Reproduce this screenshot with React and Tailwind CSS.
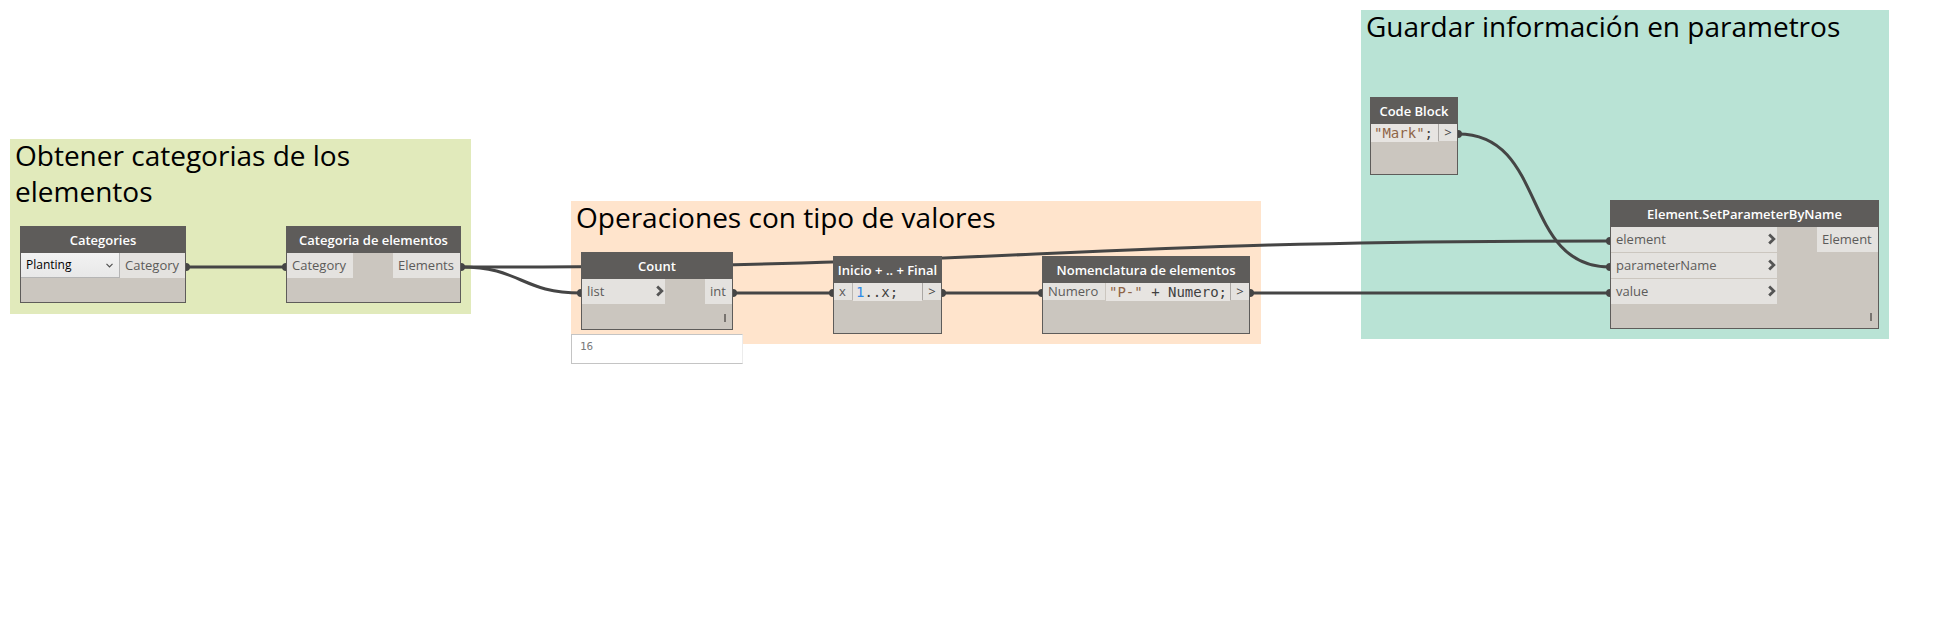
const WIRES = [
  'M187 267 H286',
  'M461 267 C1035 267 1036 241 1610 241',
  'M461 267 C521 267 521 293 581 293',
  'M733 293 H833',
  'M942 293 H1042',
  'M1250 293 H1610',
  'M1458 134 C1548 134 1520 267 1610 267',
]

const PORTS = [
  [186, 267], [286, 267], [461, 267], [581, 293], [733, 293], [833, 293], [942, 293],
  [1042, 293], [1250, 293], [1458, 134], [1610, 241], [1610, 267], [1610, 293],
]

function Wires() {
  return (
    <svg className="absolute left-0 top-0 h-[636px] w-[1940px]" viewBox="0 0 1940 636" fill="none" aria-hidden="true">
      <g stroke="#454545" strokeWidth="3">
        {WIRES.map((d) => <path key={d} d={d} />)}
      </g>
      <g fill="#454545">
        {PORTS.map(([x, y]) => <circle key={`${x}-${y}`} cx={x} cy={y} r="4" />)}
      </g>
    </svg>
  )
}

function Group({ title, className }) {
  return (
    <section className={`absolute px-[5px] ${className}`}>
      <h2 className="-mt-0.5 text-[28px] leading-9 text-black">{title}</h2>
    </section>
  )
}

function Node({ title, className, children }) {
  return (
    <article className={`absolute flex flex-col border border-[#5e5c5a] bg-[#cbc6bf] ${className}`}>
      <h3 className="flex h-[26px] shrink-0 items-center justify-center whitespace-nowrap bg-[#5e5c5a] pt-px text-[13px] font-semibold text-white">
        {title}
      </h3>
      <div className="flex items-start justify-between">{children}</div>
    </article>
  )
}

function Port({ name, chevron, size = 'h-[25px]', className = '' }) {
  return (
    <div className={`flex items-center justify-between bg-[#e4e2df] pl-[5px] text-[13px] text-[#5c5b5a] ${size} ${className}`}>
      <span>{name}</span>
      {chevron && (
        <svg className="mb-0.5 mr-px h-3 w-2" viewBox="0 0 8 12" fill="none" aria-hidden="true">
          <path d="M1.2 1.5 L5.8 6 L1.2 10.5" stroke="#555" strokeWidth="2.8" />
        </svg>
      )}
    </div>
  )
}

function Code({ children }) {
  return (
    <code className="h-[18px] flex-1 whitespace-pre bg-[#e7e4e1] pl-[3px] font-['DejaVu_Sans_Mono',monospace] text-[14px] leading-[18px] text-[#3f3f3f]">
      {children}
    </code>
  )
}

function Out() {
  return (
    <div className="flex h-[17px] w-[19px] items-center justify-center border-l border-[#aaa7a4] bg-[#e4e2df] text-[13px] text-[#444]">
      &gt;
    </div>
  )
}

function Lacing() {
  return <span className="absolute bottom-[7px] right-[6px] h-2 w-0.5 bg-[#77736f]" />
}

export default function App() {
  return (
    <main className="relative min-h-screen w-full overflow-hidden bg-white font-['Open_Sans','Noto_Sans',sans-serif]">
      <Group title="Obtener categorias de los elementos" className="left-[10px] top-[139px] h-[175px] w-[461px] bg-[#e1eabb]" />
      <Group title="Operaciones con tipo de valores" className="left-[571px] top-[201px] h-[143px] w-[690px] bg-[#ffe4cc]" />
      <Group title="Guardar información en parametros" className="left-[1361px] top-[10px] h-[329px] w-[528px] bg-[#b9e3d5]" />

      <Wires />

      <Node title="Categories" className="left-[20px] top-[226px] h-[77px] w-[166px]">
        <div className="relative w-[99px]">
          <select
            aria-label="Category"
            defaultValue="Planting"
            className="block h-[25px] w-full appearance-none border-b border-r border-[#b5b5b5] bg-linear-to-b from-[#f2f2f2] to-[#e8e8e8] pl-[5px] text-[12px] text-black"
          >
            <option>Planting</option>
          </select>
          <svg className="pointer-events-none absolute right-[7px] top-[10px] h-[5px] w-[7px]" viewBox="0 0 7 5" fill="none" aria-hidden="true">
            <path d="M0.5 0.8 L3.5 3.8 L6.5 0.8" stroke="#505050" strokeWidth="1.2" />
          </svg>
        </div>
        <Port name="Category" className="flex-1" />
      </Node>

      <Node title="Categoria de elementos" className="left-[286px] top-[226px] h-[77px] w-[175px]">
        <Port name="Category" className="w-[66px]" />
        <Port name="Elements" className="w-[67px]" />
      </Node>

      <Node title="Count" className="left-[581px] top-[252px] h-[78px] w-[152px]">
        <Port name="list" chevron className="w-[83px]" />
        <Port name="int" className="w-[27px]" />
        <Lacing />
      </Node>

      <output className="absolute left-[571px] top-[334px] h-[30px] w-[172px] border border-[#c4c4c4] border-r-[#ececec] bg-white pl-2 pt-[3px] font-['DejaVu_Sans_Mono',monospace] text-[11px] leading-[18px] text-[#7a7a7a]">
        16
      </output>

      <Node title="Inicio + .. + Final" className="left-[833px] top-[256px] h-[78px] w-[109px]">
        <Port name="x" size="h-[17px]" className="w-[19px] border-r border-[#b8b5b2]" />
        <Code><span className="text-[#2e8ae6]">1</span>..x;</Code>
        <Out />
      </Node>

      <Node title="Nomenclatura de elementos" className="left-[1042px] top-[256px] h-[78px] w-[208px]">
        <Port name="Numero" size="h-[17px]" className="w-[63px] border-r border-[#cbc6bf]" />
        <Code><span className="text-[#8f6547]">"P-"</span> + Numero;</Code>
        <Out />
      </Node>

      <Node title="Code Block" className="left-[1370px] top-[97px] h-[78px] w-[88px]">
        <Code><span className="text-[#8f6547]">"Mark"</span>;</Code>
        <Out />
      </Node>

      <Node title="Element.SetParameterByName" className="left-[1610px] top-[200px] h-[129px] w-[269px]">
        <div className="flex w-[166px] flex-col gap-px">
          <Port name="element" chevron />
          <Port name="parameterName" chevron />
          <Port name="value" chevron />
        </div>
        <Port name="Element" className="w-[61px]" />
        <Lacing />
      </Node>
    </main>
  )
}
